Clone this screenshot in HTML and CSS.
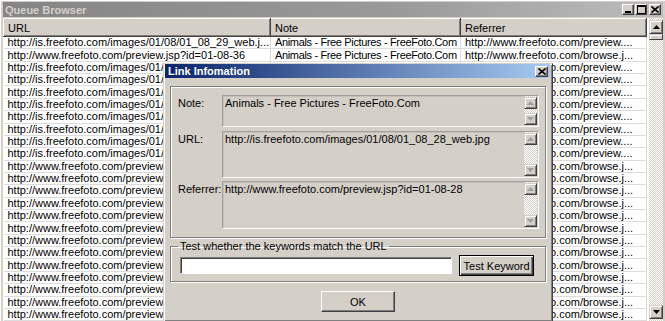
FILE: index.html
```html
<!DOCTYPE html>
<html lang="en">
<head>
  <meta charset="UTF-8" />
  <title>Queue Browser</title>
  <link rel="stylesheet" href="styles.css">
</head>
<body>
  <div class="window">
    <div class="titlebar">
      <span class="title">Queue Browser</span>
      <div class="caption-btns">
        <span class="cbtn"><svg width="8" height="7" viewBox="0 0 8 7"><rect x="1" y="5" width="6" height="2" fill="#000"/></svg></span>
        <span class="cbtn"><svg width="9" height="9" viewBox="0 0 9 9"><rect x="0.5" y="0.5" width="8" height="8" fill="none" stroke="#000"/><rect x="0" y="0" width="9" height="2" fill="#000"/></svg></span>
        <span class="cbtn close"><svg width="8" height="7" viewBox="0 0 8 7"><path d="M0.5 0.5 L7.5 6.5 M7.5 0.5 L0.5 6.5" stroke="#000" stroke-width="1.6"/></svg></span>
      </div>
    </div>

    <div class="list">
      <div class="grid-wrap">
        <table class="grid">
          <colgroup><col class="c-url"><col class="c-note"><col class="c-ref"></colgroup>
          <thead><tr><th>URL</th><th>Note</th><th>Referrer</th></tr></thead>
          <tbody id="rows"></tbody>
        </table>
      </div>
      <div class="vscroll">
        <div class="sb-btn"><svg width="7" height="4" viewBox="0 0 7 4"><path d="M3.5 0 L7 4 L0 4 Z" fill="#000"/></svg></div>
        <div class="sb-thumb"></div>
        <div class="sb-track"></div>
        <div class="sb-btn"><svg width="7" height="4" viewBox="0 0 7 4"><path d="M0 0 L7 0 L3.5 4 Z" fill="#000"/></svg></div>
      </div>
    </div>

    <div class="dialog">
      <div class="dlg-title">
        <span>Link Infomation</span>
        <span class="cbtn dlg-close"><svg width="8" height="7" viewBox="0 0 8 7"><path d="M0.5 0.5 L7.5 6.5 M7.5 0.5 L0.5 6.5" stroke="#000" stroke-width="1.6"/></svg></span>
      </div>
      <div class="dlg-body">
        <div class="group info">
          <div class="field-row note-row">
            <label>Note:</label>
            <div class="field">
              <div class="field-text">Animals - Free Pictures - FreeFoto.Com</div>
              <div class="fscroll">
                <div class="sb-btn dis"><svg width="7" height="4" viewBox="0 0 7 4"><path d="M3.5 0 L7 4 L0 4 Z" fill="#a0a0a0"/></svg></div>
                <div class="sb-track"></div>
                <div class="sb-btn dis"><svg width="7" height="4" viewBox="0 0 7 4"><path d="M0 0 L7 0 L3.5 4 Z" fill="#a0a0a0"/></svg></div>
              </div>
            </div>
          </div>
          <div class="field-row url-row">
            <label>URL:</label>
            <div class="field">
              <div class="field-text">http://is.freefoto.com/images/01/08/01_08_28_web.jpg</div>
              <div class="fscroll">
                <div class="sb-btn dis"><svg width="7" height="4" viewBox="0 0 7 4"><path d="M3.5 0 L7 4 L0 4 Z" fill="#a0a0a0"/></svg></div>
                <div class="sb-track"></div>
                <div class="sb-btn dis"><svg width="7" height="4" viewBox="0 0 7 4"><path d="M0 0 L7 0 L3.5 4 Z" fill="#a0a0a0"/></svg></div>
              </div>
            </div>
          </div>
          <div class="field-row ref-row">
            <label>Referrer:</label>
            <div class="field">
              <div class="field-text">http://www.freefoto.com/preview.jsp?id=01-08-28</div>
              <div class="fscroll">
                <div class="sb-btn dis"><svg width="7" height="4" viewBox="0 0 7 4"><path d="M3.5 0 L7 4 L0 4 Z" fill="#a0a0a0"/></svg></div>
                <div class="sb-track"></div>
                <div class="sb-btn dis"><svg width="7" height="4" viewBox="0 0 7 4"><path d="M0 0 L7 0 L3.5 4 Z" fill="#a0a0a0"/></svg></div>
              </div>
            </div>
          </div>
        </div>

        <fieldset class="group test">
          <legend>Test whether the keywords match the URL</legend>
          <div class="test-row">
            <input type="text" class="kw-input" />
            <button class="btn default">Test Keyword</button>
          </div>
        </fieldset>

        <div class="ok-row">
          <button class="btn ok">OK</button>
        </div>
      </div>
    </div>
  </div>

  <script>
    const note = 'Animals - Free Pictures - FreeFoto.Com';
    const rows = [
      ['http://is.freefoto.com/images/01/08/01_08_29_web.j...', 'http://www.freefoto.com/preview....'],
      ['http://www.freefoto.com/preview.jsp?id=01-08-36', 'http://www.freefoto.com/browse.j...']
    ];
    for (let i = 0; i < 8; i++) rows.push(['http://is.freefoto.com/images/01/08/01_08_' + (30 + i) + '_web.j...', 'http://www.freefoto.com/preview....']);
    for (let i = 0; i < 14; i++) rows.push(['http://www.freefoto.com/preview.jsp?id=01-08-' + (37 + i), 'http://www.freefoto.com/browse.j...']);
    const tb = document.getElementById('rows');
    rows.forEach(r => {
      const tr = document.createElement('tr');
      [r[0], note, r[1]].forEach((t, i) => {
        const td = document.createElement('td');
        td.textContent = t;
        if (i === 1) td.className = 'note';
        tr.appendChild(td);
      });
      tb.appendChild(tr);
    });
  </script>
</body>
</html>
```

FILE: styles.css
```css
:root {
  --face: #d4d0c8;
  --shadow: #808080;
  --dark: #404040;
  --light: #fff;
}
* { box-sizing: border-box; }
body {
  margin: 0;
  width: 665px;
  height: 321px;
  overflow: hidden;
  background: var(--face);
  font-family: "Liberation Sans", Arial, sans-serif;
  font-size: 11px;
  color: #000;
}
.window {
  position: relative;
  height: 321px;
  padding: 2px 2px 0 2px;
  border-left: 1px solid var(--light);
  border-top: 1px solid var(--light);
  display: flex;
  flex-direction: column;
}
.titlebar {
  height: 15px;
  flex: none;
  display: flex;
  align-items: center;
  justify-content: space-between;
  padding: 0 2px 0 2px;
  background: linear-gradient(to right, #858585, #9a9a9a 60%, #bdbdbd);
  margin-top: -1px;
}
.title {
  font-weight: bold;
  color: #d4d0c8;
  font-size: 11px;
}
.caption-btns { display: flex; gap: 0; }
.cbtn {
  width: 12px;
  height: 11px;
  display: flex;
  align-items: center;
  justify-content: center;
  background: var(--face);
  border: 1px solid;
  border-color: var(--light) var(--dark) var(--dark) var(--light);
  box-shadow: inset -1px -1px var(--shadow);
}
.cbtn + .cbtn { margin-left: 1px; }
.cbtn.close { margin-left: 2px; }

.list {
  flex: 1;
  display: flex;
  margin-top: 1px;
  min-height: 0;
}
.grid-wrap {
  flex: 1;
  background: #fff;
  overflow: hidden;
}
.grid {
  table-layout: fixed;
  border-collapse: collapse;
  width: 643px;
}
.c-url { width: 267px; }
.c-note { width: 190px; }
.c-ref { width: 186px; }
.grid th {
  height: 18px;
  padding: 0 4px;
  text-align: left;
  font-weight: normal;
  background: var(--face);
  border: 1px solid;
  border-color: var(--light) var(--dark) var(--dark) var(--light);
  box-shadow: inset -1px -1px var(--shadow);
  white-space: nowrap;
  overflow: hidden;
}
.grid td {
  height: 12.36px;
  padding: 0 4px;
  line-height: 11px;
  white-space: nowrap;
  overflow: hidden;
  border-right: 1px solid #dcdcdc;
  border-bottom: 1px solid #dcdcdc;
}
.grid td.note { letter-spacing: -0.35px; }

.vscroll {
  width: 14px;
  flex: none;
  display: flex;
  flex-direction: column;
  padding-top: 2px;
  background: repeating-conic-gradient(#fff 0 25%, var(--face) 0 50%) 0 0 / 2px 2px;
}
.sb-btn {
  height: 14px;
  flex: none;
  display: flex;
  align-items: center;
  justify-content: center;
  background: var(--face);
  border: 1px solid;
  border-color: var(--face) var(--dark) var(--dark) var(--face);
  box-shadow: inset 1px 1px var(--light), inset -1px -1px var(--shadow);
}
.sb-thumb {
  height: 6px;
  flex: none;
  background: var(--face);
  border: 1px solid;
  border-color: var(--face) var(--dark) var(--dark) var(--face);
  box-shadow: inset 1px 1px var(--light);
}
.sb-track { flex: 1; }
.vscroll > .sb-btn:last-child { margin-bottom: 2px; }

/* dialog */
.dialog {
  position: absolute;
  left: 162px;
  top: 62px;
  width: 390px;
  height: 259px;
  background: var(--face);
  border: 1px solid;
  border-color: var(--face) var(--dark) var(--dark) var(--face);
  box-shadow: inset 1px 1px var(--light), inset -1px -1px var(--shadow);
  padding: 0 2px 2px 1px;
}
.dlg-title {
  height: 14px;
  display: flex;
  align-items: center;
  justify-content: space-between;
  padding: 0 2px 0 3px;
  background: linear-gradient(to right, #0a246a, #a6caf0);
  color: #fff;
  font-weight: bold;
}
.dlg-close { width: 13px; height: 11px; }
.dlg-body {
  padding: 8px 4px 0 5px;
}
.group {
  border: 1px solid var(--shadow);
  box-shadow: inset 1px 1px var(--light), 1px 1px var(--light);
}
.info {
  height: 152px;
  padding: 8px 6px 0 7px;
}
.field-row {
  display: flex;
}
.field-row label {
  width: 44px;
  flex: none;
  padding-top: 2px;
}
.note-row { height: 32px; }
.url-row { height: 47px; margin-top: 4px; }
.ref-row { height: 48px; margin-top: 3px; }
.field {
  flex: 1;
  display: flex;
  border: 1px solid;
  border-color: #a0a0a0 var(--light) var(--light) #a0a0a0;
  box-shadow: inset 1px 1px #c4c0b8;
  padding: 0 1px 1px 2px;
}
.field-text {
  flex: 1;
  padding-top: 1px;
  white-space: nowrap;
  overflow: hidden;
}
.fscroll {
  width: 13px;
  flex: none;
  display: flex;
  flex-direction: column;
  padding-top: 1px;
  background: repeating-conic-gradient(#fff 0 25%, var(--face) 0 50%) 0 0 / 2px 2px;
}
.fscroll .sb-btn { height: 12px; }

.test {
  margin: 3px 0 0 0;
  padding: 3px 11px 0 9px;
  height: 41px;
  min-width: 0;
}
.test legend {
  padding: 0 2px;
  margin-left: -2px;
  line-height: 11px;
}
.test-row {
  display: flex;
  align-items: center;
  gap: 7px;
}
.kw-input {
  width: 273px;
  height: 17px;
  background: #fff;
  border: 1px solid;
  border-color: var(--shadow) var(--light) var(--light) var(--shadow);
  box-shadow: inset 1px 1px var(--dark);
  padding: 0 2px;
  font: inherit;
}
.btn {
  height: 21px;
  font: inherit;
  color: #000;
  background: var(--face);
  border: 1px solid;
  border-color: var(--light) var(--dark) var(--dark) var(--light);
  box-shadow: inset -1px -1px var(--shadow);
  padding: 0;
}
.btn.default {
  width: 75px;
  border: 1px solid #000;
  box-shadow: inset 1px 1px var(--light), inset -1px -1px var(--dark), inset -2px -2px var(--shadow);
}
.ok-row {
  display: flex;
  justify-content: center;
  margin-top: 9px;
}
.btn.ok { width: 74px; }
```
